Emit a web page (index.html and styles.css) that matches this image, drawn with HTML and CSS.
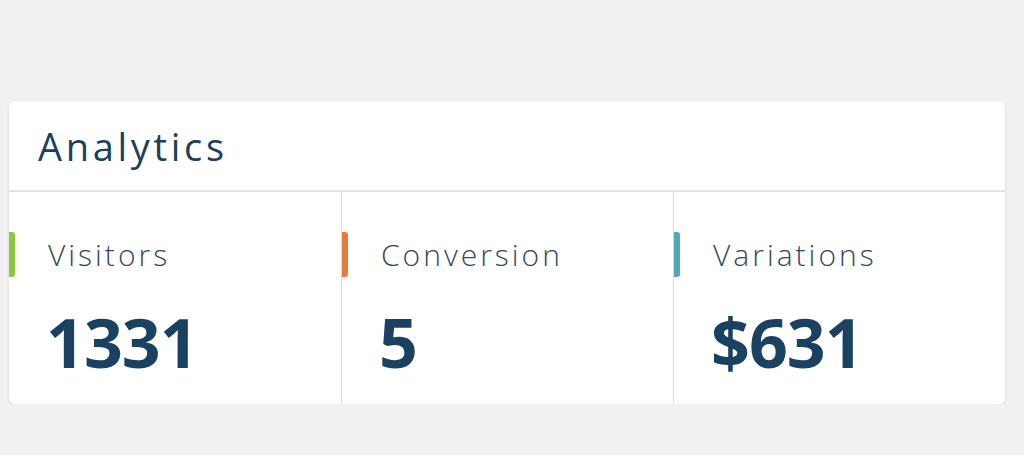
FILE: index.html
```html
<!DOCTYPE html>
<html lang="en">

<head>
    <meta charset="utf8">
    <title>Analytics</title>
    <link rel="stylesheet" href="styles.css">
</head>

<body>
    <div class="card">
        <header class="card-header">
            <h1>Analytics</h1>
        </header>
        <div class="stats">
            <div class="stat">
                <div class="stat-head">
                    <span class="marker green"></span>
                    <span class="label">Visitors</span>
                </div>
                <div class="value">1331</div>
            </div>
            <div class="stat">
                <div class="stat-head">
                    <span class="marker orange"></span>
                    <span class="label">Conversion</span>
                </div>
                <div class="value">5</div>
            </div>
            <div class="stat">
                <div class="stat-head">
                    <span class="marker teal"></span>
                    <span class="label">Variations</span>
                </div>
                <div class="value">$631</div>
            </div>
        </div>
    </div>
</body>

</html>
```

FILE: styles.css
```css
* {
    box-sizing: border-box;
    margin: 0;
    padding: 0;
}

body {
    background-color: #f1f1f1;
    font-family: "Open Sans", "Liberation Sans", sans-serif;
    color: #1b3f5e;
}

.card {
    width: 996px;
    margin: 101px 0 0 9px;
    background-color: #fff;
    border-radius: 6px;
    box-shadow: 0 1px 3px rgba(0, 0, 0, .12);
    overflow: hidden;
}

.card-header {
    height: 91px;
    border-bottom: 2px solid #e2e2e2;
    padding: 26px 0 0 29px;
}

.card-header h1 {
    font-size: 38px;
    font-weight: 400;
    letter-spacing: 3.7px;
    line-height: 1;
}

.stats {
    display: grid;
    grid-template-columns: repeat(3, 1fr);
    height: 212px;
}

.stat {
    border-left: 1px solid #dcdcdc;
    padding-top: 40px;
}

.stat:first-child {
    border-left: 0 none;
}

.stat-head {
    display: flex;
    align-items: center;
    gap: 33px;
}

.marker {
    width: 6px;
    height: 45px;
    border-radius: 0 3px 3px 0;
}

.marker.green { background-color: #8cc63f; }
.marker.orange { background-color: #e57c3a; }
.marker.teal { background-color: #4fa9b6; }

.label {
    font-size: 30px;
    font-weight: 300;
    letter-spacing: 3px;
    color: #34495c;
}

.value {
    font-size: 68px;
    font-weight: 700;
    line-height: 1;
    letter-spacing: -1px;
    padding: 31px 0 0 37px;
    color: #1a4162;
}
```
